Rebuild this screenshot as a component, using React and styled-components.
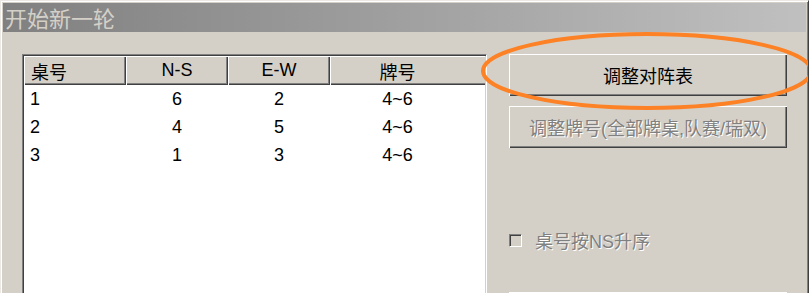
import styled, {createGlobalStyle} from 'styled-components';

const GlobalStyle = createGlobalStyle`
  html, body {
    margin: 0;
    padding: 0;
    background: #d4d0c8;
  }
  body {
    font-family: "Liberation Sans", "Noto Sans CJK SC", sans-serif;
  }
`;

const Window = styled.div`
  position: relative;
  box-sizing: border-box;
  width: 809px;
  height: 293px;
  overflow: hidden;
  background: #d4d0c8;
  border-top: 1px solid #ece9e4;
  border-left: 1px solid #ece9e4;
  border-right: 1px solid #404040;
  box-shadow: inset 1px 1px #ffffff, inset -1px 0 #808080;
  padding: 2px 2px 0 2px;
`;

const TitleBar = styled.div`
  height: 29px;
  display: flex;
  align-items: center;
  padding-left: 2px;
  background: linear-gradient(to right, #808080, #c0c0c0);
  color: #d4d0c8;
  font-size: 22px;
  font-family: "Noto Sans CJK SC", sans-serif;
  line-height: 29px;
`;

const Body = styled.div`
  display: flex;
  align-items: flex-start;
  padding: 22px 0 0 19px;
`;

const ListView = styled.div`
  box-sizing: border-box;
  width: 465px;
  height: 260px;
  background: #ffffff;
  border-top: 1px solid #808080;
  border-left: 1px solid #808080;
  border-right: 1px solid #ffffff;
  border-bottom: 1px solid #ffffff;
  box-shadow: inset 1px 1px #404040, inset -1px -1px #d4d0c8;
  padding: 1px;
  font-size: 18px;
`;

const Row = styled.div`
  display: flex;
  height: ${({$header}) => ($header ? '29px' : '28px')};
  background: ${({$header}) => ($header ? '#d4d0c8' : 'transparent')};
`;

const HeadCell = styled.div`
  box-sizing: border-box;
  width: ${({$w}) => $w}px;
  display: flex;
  align-items: center;
  justify-content: ${({$left}) => ($left ? 'flex-start' : 'center')};
  padding-left: ${({$left}) => ($left ? '7px' : '0')};
  box-shadow: inset 1px 1px #ffffff, inset -1px -1px #404040, inset -2px -2px #808080;
  color: #000;
`;

const LastHeadCell = styled(HeadCell)`
  flex: 1;
  padding-right: 20px;
  box-shadow: inset 0 1px #ffffff, inset 1px 0 #ffffff, inset 0 -1px #404040, inset 0 -2px #808080;
`;

const Cell = styled.div`
  box-sizing: border-box;
  width: ${({$w}) => $w}px;
  display: flex;
  align-items: center;
  justify-content: ${({$left}) => ($left ? 'flex-start' : 'center')};
  padding-left: ${({$left}) => ($left ? '6px' : '0')};
  color: #000;
`;

const Side = styled.div`
  display: flex;
  flex-direction: column;
  width: 278px;
  margin-left: 22px;
`;

const Button = styled.button`
  box-sizing: border-box;
  width: 278px;
  height: 42px;
  margin: 0;
  margin-top: ${({$gap}) => $gap || 0}px;
  padding: 0;
  border: none;
  background: #d4d0c8;
  box-shadow: inset 1px 1px #ffffff, inset -1px -1px #404040, inset -2px -2px #808080;
  font-family: "Liberation Sans", "Noto Sans CJK SC", sans-serif;
  font-size: 18px;
  color: ${({disabled}) => (disabled ? '#808080' : '#000')};
  text-shadow: ${({disabled}) => (disabled ? '1px 1px #ffffff' : 'none')};
  outline: none;
`;

const CheckRow = styled.label`
  display: flex;
  align-items: center;
  height: 20px;
  margin-top: 82px;
  font-size: 18px;
  color: #808080;
  text-shadow: 1px 1px #ffffff;
`;

const CheckBox = styled.span`
  box-sizing: border-box;
  width: 13px;
  height: 13px;
  margin-right: 13px;
  background: #d4d0c8;
  border-top: 1px solid #808080;
  border-left: 1px solid #808080;
  border-right: 1px solid #ffffff;
  border-bottom: 1px solid #ffffff;
  box-shadow: inset 1px 1px #404040, inset -1px -1px #d4d0c8;
`;

const Annotation = styled.svg`
  position: absolute;
  left: 478px;
  top: 29px;
  pointer-events: none;
`;

const columns = [
  {title: '桌号', w: 102, left: true},
  {title: 'N-S', w: 102},
  {title: 'E-W', w: 102},
  {title: '牌号', w: 135},
];

const rows = [
  ['1', '6', '2', '4~6'],
  ['2', '4', '5', '4~6'],
  ['3', '1', '3', '4~6'],
];

export default function App() {
  return (
    <>
      <GlobalStyle />
      <Window>
        <TitleBar>开始新一轮</TitleBar>
        <Body>
          <ListView>
            <Row $header>
              {columns.slice(0, 3).map(c => (
                <HeadCell key={c.title} $w={c.w} $left={c.left}>{c.title}</HeadCell>
              ))}
              <LastHeadCell>牌号</LastHeadCell>
            </Row>
            {rows.map((r, i) => (
              <Row key={i}>
                {r.map((v, j) => (
                  <Cell key={j} $w={columns[j].w} $left={columns[j].left}>{v}</Cell>
                ))}
              </Row>
            ))}
          </ListView>
          <Side>
            <Button>调整对阵表</Button>
            <Button $gap={10} disabled>调整牌号(全部牌桌,队赛/瑞双)</Button>
            <CheckRow>
              <CheckBox />
              桌号按NS升序
            </CheckRow>
            <Button $gap={42} />
          </Side>
        </Body>
        <Annotation width="340" height="84" viewBox="0 0 340 84">
          <ellipse cx="168" cy="41" rx="164" ry="37" fill="none" stroke="#fd8125" strokeWidth="4" />
        </Annotation>
      </Window>
    </>
  );
}
